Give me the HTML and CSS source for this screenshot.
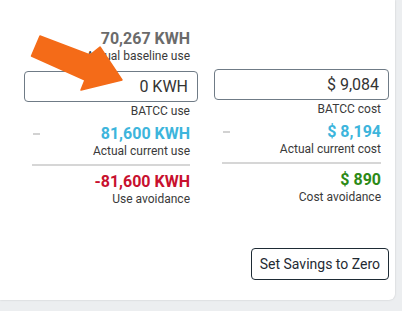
FILE: index.html
```html
<!DOCTYPE html>
<html>
<head>
<meta charset="utf-8">
<link rel="stylesheet" href="styles.css">
</head>
<body>
<div class="card">
  <div class="cols">
    <div class="col col-left">
      <div class="stat">
        <div class="value grey">70,267 KWH</div>
        <div class="label">Actual baseline use</div>
      </div>
      <div class="field field-left">0 KWH</div>
      <div class="label field-label">BATCC use</div>
      <div class="row">
        <span class="dash"></span>
        <span class="value blue">81,600 KWH</span>
      </div>
      <div class="label">Actual current use</div>
      <div class="sep"></div>
      <div class="value red result">-81,600 KWH</div>
      <div class="label">Use avoidance</div>
    </div>
    <div class="col col-right">
      <div class="field field-right">$ 9,084</div>
      <div class="label field-label">BATCC cost</div>
      <div class="row">
        <span class="dash"></span>
        <span class="value blue">$ 8,194</span>
      </div>
      <div class="label">Actual current cost</div>
      <div class="sep"></div>
      <div class="value green result">$ 890</div>
      <div class="label">Cost avoidance</div>
    </div>
  </div>
  <div class="actions">
    <button class="btn">Set Savings to Zero</button>
  </div>
  <svg class="arrow" width="130" height="100" viewBox="0 0 130 100">
    <polygon points="40,36 90,55 100,47 122,80 81,90 85,80 31.5,56" fill="#f46b18" stroke="#f46b18" stroke-width="1.5" stroke-linejoin="round"/>
  </svg>
</div>
</body>
</html>
```
FILE: styles.css
```css
html, body {
  margin: 0;
  padding: 0;
}
body {
  background: #eceef0;
  font-family: Roboto, "Liberation Sans", sans-serif;
  width: 402px;
  height: 311px;
  overflow: hidden;
}
.card {
  position: relative;
  width: 395px;
  height: 300px;
  box-sizing: border-box;
  background: #ffffff;
  border-radius: 0 0 6px 0;
  box-shadow: 0 0 2px rgba(0, 0, 0, 0.18);
  padding: 30px 6px 19px 24px;
}
.cols {
  display: grid;
  grid-template-columns: 174px 175px;
  column-gap: 16px;
  align-items: start;
}
.col {
  display: flex;
  flex-direction: column;
  text-align: right;
}
.stat {
  padding: 0 8px;
}
.value {
  font-size: 16px;
  line-height: 18px;
  font-weight: 700;
}
.label {
  font-size: 12px;
  line-height: 16px;
  color: #3a3a3a;
  padding: 0 8px;
}
.stat .label {
  padding: 0;
}
.grey { color: #6b6b6b; }
.blue { color: #3db5dc; }
.red { color: #c8102e; }
.green { color: #2d8a16; }
.field {
  height: 31px;
  box-sizing: border-box;
  border: 1px solid #6f7b86;
  border-radius: 4px;
  padding: 0 9px;
  font-size: 16px;
  line-height: 29px;
  color: #333333;
}
.field-left { margin-top: 7px; }
.field-right { margin-top: 39px; }
.field-label { margin-top: 1px; }
.row {
  display: flex;
  justify-content: space-between;
  align-items: center;
  padding: 0 8px;
  margin-top: 6px;
}
.dash {
  width: 7px;
  height: 2px;
  background: #d2d2d2;
  margin-left: 1px;
}
.sep {
  height: 2px;
  background: #d6d6d6;
  margin: 5px 8px 0;
}
.result {
  margin-top: 7px;
  padding: 0 8px;
}
.actions {
  display: flex;
  justify-content: flex-end;
  margin-top: 41px;
}
.btn {
  height: 32px;
  box-sizing: border-box;
  border: 1px solid #1e2b35;
  border-radius: 4px;
  background: #ffffff;
  padding: 0 8px;
  font-family: Roboto, "Liberation Sans", sans-serif;
  font-size: 14px;
  color: #1f2a33;
  line-height: 30px;
}
.arrow {
  position: absolute;
  left: 0;
  top: 0;
}
```
